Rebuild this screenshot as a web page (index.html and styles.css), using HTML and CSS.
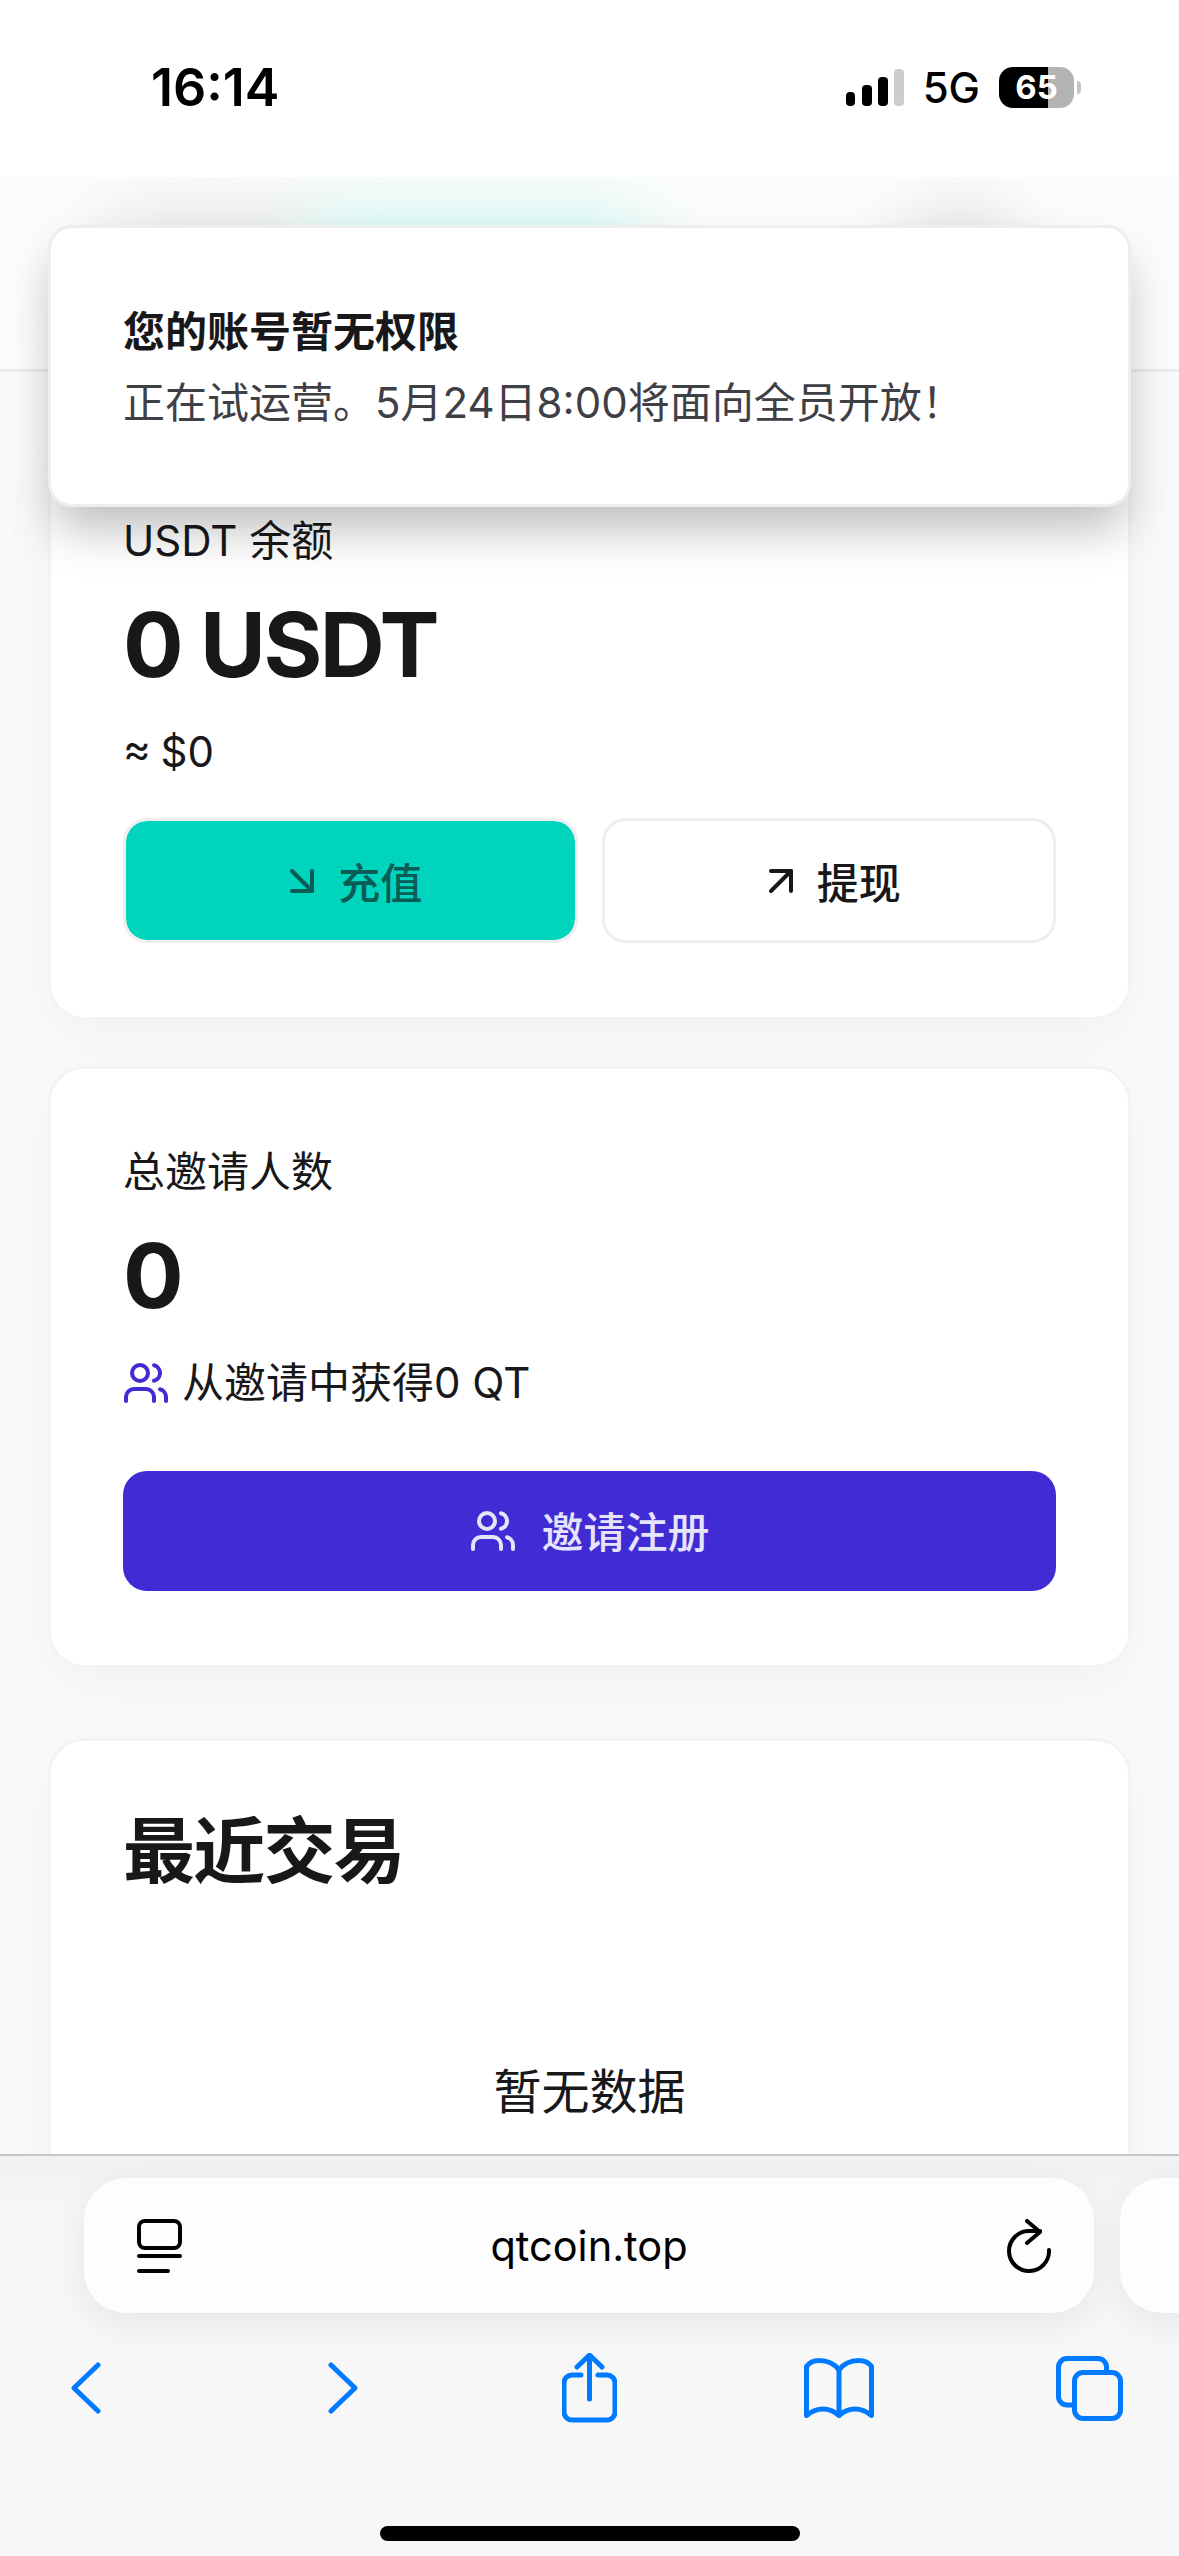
FILE: index.html
```html
<!DOCTYPE html>
<html lang="zh-CN">
<head>
<meta charset="utf-8">
<title>qtcoin.top</title>
<link rel="stylesheet" href="styles.css">
</head>
<body>
<div class="phone">
  <div class="statusbar">
    <span class="time">16:14</span>
    <div class="status-right">
      <svg class="signal" width="58" height="37" viewBox="0 0 58 37">
        <rect x="0" y="23" width="9" height="14" rx="4"/>
        <rect x="16" y="16" width="10" height="21" rx="4"/>
        <rect x="32" y="8" width="10" height="29" rx="4"/>
        <rect class="signal-off" x="48" y="0" width="10" height="37" rx="4"/>
      </svg>
      <span class="net">5G</span>
      <div class="battery">65</div>
      <span class="batt-nub"></span>
    </div>
  </div>

  <header class="topbar">
    <span class="blob blob-gray"></span>
    <span class="blob blob-teal"></span>
    <span class="blob blob-avatar"></span>
  </header>

  <main class="content">
    <section class="card card-balance">
      <div class="label">USDT 余额</div>
      <div class="amount">0 USDT</div>
      <div class="label approx">≈ $0</div>
      <div class="actions">
        <button class="btn btn-teal">
          <svg class="lucide" viewBox="0 0 24 24"><path d="m7 7 10 10"/><path d="M17 7v10H7"/></svg>
          <span>充值</span>
        </button>
        <button class="btn btn-plain">
          <svg class="lucide" viewBox="0 0 24 24"><path d="M7 7h10v10"/><path d="M7 17 17 7"/></svg>
          <span>提现</span>
        </button>
      </div>
    </section>

    <section class="card card-invite">
      <div class="label">总邀请人数</div>
      <div class="amount">0</div>
      <div class="label earned">
        <svg class="lucide lucide-purple" viewBox="0 0 24 24"><path d="M16 21v-2a4 4 0 0 0-4-4H6a4 4 0 0 0-4 4v2"/><circle cx="9" cy="7" r="4"/><path d="M22 21v-2a4 4 0 0 0-3-3.87"/><path d="M16 3.13a4 4 0 0 1 0 7.75"/></svg>
        <span>从邀请中获得0 QT</span>
      </div>
      <button class="btn-invite">
        <svg class="lucide" viewBox="0 0 24 24"><path d="M16 21v-2a4 4 0 0 0-4-4H6a4 4 0 0 0-4 4v2"/><circle cx="9" cy="7" r="4"/><path d="M22 21v-2a4 4 0 0 0-3-3.87"/><path d="M16 3.13a4 4 0 0 1 0 7.75"/></svg>
        <span class="btn-invite-text">邀请注册</span>
      </button>
    </section>

    <section class="card card-recent">
      <h2 class="recent-title">最近交易</h2>
      <div class="empty">暂无数据</div>
    </section>
  </main>

  <div class="toast">
    <div class="toast-title">您的账号暂无权限</div>
    <div class="toast-text">正在试运营。5月24日8:00将面向全员开放！</div>
  </div>

  <div class="safari">
    <div class="pills">
      <div class="pill">
        <svg class="pill-tabs" width="45" height="54" viewBox="0 0 45 54">
          <rect x="2" y="2" width="41" height="27" rx="6"/>
          <path d="M2 37h41"/>
          <path d="M2 52h29"/>
        </svg>
        <span class="url">qtcoin.top</span>
        <svg class="pill-reload" width="44" height="54" viewBox="0 0 44 54">
          <path d="M42 31a20 20 0 1 1-20-19h11"/>
          <path d="M20 2l13 11-13 11"/>
        </svg>
      </div>
      <div class="pill pill-next"></div>
    </div>
    <div class="toolbar">
      <svg class="tool" width="30" height="52" viewBox="0 0 30 52"><path d="M27 3 3 26l24 23"/></svg>
      <svg class="tool" width="30" height="52" viewBox="0 0 30 52"><path d="M3 3l24 23L3 49"/></svg>
      <svg class="tool tool-share" width="55" height="70" viewBox="0 0 55 70">
        <path d="M19 22h-9a8 8 0 0 0-8 8v29a8 8 0 0 0 8 8h35a8 8 0 0 0 8-8V30a8 8 0 0 0-8-8h-9"/>
        <path d="M27.500 3v43"/>
        <path d="M15 14 27.500 2 40 14"/>
      </svg>
      <svg class="tool tool-book" width="70" height="60" viewBox="0 0 70 60">
        <path d="M35 12C30 5 22 2.500 15 2.500 9 2.500 5 5 2.500 8.500v49C8 53 13 51 19 51c7 0 12 3 16 6.500 4-3.500 9-6.500 16-6.500 6 0 11 2 16.500 6.500v-49C65 5 61 2.500 55 2.500 48 2.500 40 5 35 12Zm0 0v45"/>
      </svg>
      <svg class="tool tool-copies" width="67" height="65" viewBox="0 0 67 65">
        <path d="M16 49h-5a8.500 8.500 0 0 1-8.500-8.500v-29A8.500 8.500 0 0 1 11 2.500h31a8.500 8.500 0 0 1 8.500 8.500v4"/>
        <rect x="18.500" y="16.500" width="46" height="46" rx="8.500"/>
      </svg>
    </div>
    <div class="home-row"><span class="home-bar"></span></div>
  </div>
</div>
</body>
</html>
```

FILE: styles.css
```css
* { box-sizing: border-box; }
html, body { margin: 0; padding: 0; }
body {
  background: #fafafa;
  color: #18181b;
  font-family: Inter, "Noto Sans CJK SC", sans-serif;
}
.phone {
  position: relative;
  width: 1179px;
  height: 2556px;
  overflow: hidden;
  background: #fafafa;
}

/* status bar */
.statusbar {
  height: 177px;
  background: #fff;
  display: flex;
  justify-content: space-between;
  align-items: center;
  padding: 0 98px 2px 151px;
  color: #000;
}
.time { font-size: 52px; font-weight: 600; line-height: 60px; }
.status-right { display: flex; align-items: center; }
.signal rect { fill: #000; }
.signal .signal-off { fill: #cdcdcd; }
.net { font-size: 42px; font-weight: 500; margin: 0 19px 0 19px; line-height: 48px; }
.battery {
  width: 75px;
  height: 41px;
  border-radius: 14px;
  background: linear-gradient(to right, #000 49px, #b3b3b3 49px);
  color: #fff;
  font-size: 33px;
  font-weight: 700;
  line-height: 41px;
  text-align: center;
}
.batt-nub {
  width: 4px;
  height: 13px;
  margin-left: 3px;
  background: #c4c4c4;
  border-radius: 0 6px 6px 0;
}

/* blurred site header behind the notice */
.topbar {
  height: 195px;
  background: #fcfcfc;
  border-bottom: 3px solid #ececec;
  display: flex;
  align-items: center;
  padding: 0 170px 0 110px;
  overflow: hidden;
}
.blob { display: block; height: 90px; filter: blur(40px); }
.blob-gray { width: 200px; background: #d8d8d8; }
.blob-teal { width: 330px; background: #b4f3ea; }
.blob-avatar { width: 100px; margin-left: auto; background: #c4c4c4; border-radius: 50%; }

/* cards */
.content { padding: 66px 48px 0; }
.card {
  background: #fff;
  border: 3px solid #f3f3f3;
  border-radius: 36px;
  padding: 72px 72px 74px;
  box-shadow: 0 18px 60px rgba(0, 0, 0, 0.035);
}
.card-invite { margin-top: 46px; padding-top: 75px; }
.card-recent { margin-top: 70px; padding-top: 74px; padding-bottom: 400px; }
.label { font-size: 42px; line-height: 56px; }
.amount { font-size: 90px; font-weight: 700; letter-spacing: -2.5px; line-height: 108px; margin-top: 22px; }
.approx { margin-top: 25px; word-spacing: -2px; }
.earned {
  display: flex;
  align-items: center;
  gap: 12px;
  margin-top: 25px;
  margin-left: -1px;
}
.lucide {
  width: 48px;
  height: 48px;
  fill: none;
  stroke: currentColor;
  stroke-width: 2;
  stroke-linecap: round;
  stroke-linejoin: round;
  flex: none;
}
.lucide-purple { color: #402bd4; }

.actions {
  display: grid;
  grid-template-columns: 1fr 1fr;
  gap: 24px;
  margin-top: 38px;
}
.btn {
  height: 125px;
  border: 3px solid #eeeeee;
  border-radius: 24px;
  display: flex;
  align-items: center;
  justify-content: center;
  gap: 12px;
  font: inherit;
  font-size: 42px;
  font-weight: 500;
}
.btn-teal { background: #00d4bc; color: #0b5c55; background-clip: padding-box; }
.btn-plain { background: #fff; color: #18181b; }
.btn-invite {
  width: 933px;
  height: 120px;
  margin: 60px 0 0;
  border: 0;
  border-radius: 24px;
  background: #402bd4;
  color: #e6e4fb;
  display: flex;
  align-items: center;
  justify-content: center;
  gap: 24px;
  font: inherit;
  font-size: 42px;
  font-weight: 500;
}
.btn-invite-text { padding-bottom: 4px; }
.recent-title { margin: 0; font-size: 72px; font-weight: 700; letter-spacing: -1.8px; line-height: 72px; }
.empty { margin-top: 169px; font-size: 48px; line-height: 72px; text-align: center; }

/* notice */
.toast {
  position: absolute;
  top: 225px;
  left: 48px;
  width: 1083px;
  height: 282px;
  background: #fff;
  border: 3px solid #eeeeee;
  border-radius: 24px;
  box-shadow: 0 28px 48px -6px rgba(0, 0, 0, 0.26);
  display: flex;
  flex-direction: column;
  justify-content: center;
  gap: 15px;
  padding: 2px 72px 0;
}
.toast-title { font-size: 42px; font-weight: 600; line-height: 56px; }
.toast-text { font-size: 42px; line-height: 56px; color: #3f3f46; }

/* safari chrome */
.safari {
  position: absolute;
  left: 0;
  right: 0;
  bottom: 0;
  height: 402px;
  background: linear-gradient(#f1f1f1, #f7f7f7 60px);
  border-top: 2px solid #c6c6c6;
}
.pills {
  display: flex;
  gap: 26px;
  margin: 22px 0 0 84px;
}
.pill {
  flex: none;
  width: 1010px;
  height: 135px;
  background: #fdfdfd;
  border-radius: 42px;
  box-shadow: 0 10px 36px rgba(0, 0, 0, 0.07);
  display: grid;
  grid-template-columns: 1fr auto 1fr;
  align-items: center;
  padding: 0 53px;
}
.pill-next { width: 200px; }
.pill-tabs { fill: none; stroke: #000; stroke-width: 4; stroke-linecap: round; }
.pill-reload {
  justify-self: end;
  margin-right: -10px;
  fill: none;
  stroke: #000;
  stroke-width: 4;
  stroke-linecap: round;
  stroke-linejoin: round;
}
.url { font-size: 41.500px; color: #000; line-height: 52px; }

.toolbar {
  display: grid;
  grid-template-columns: 257px 234px 242px 252px 67px;
  align-items: center;
  height: 70px;
  margin-top: 40px;
  padding-left: 71px;
}
.tool {
  fill: none;
  stroke: #007aff;
  stroke-width: 5;
  stroke-linecap: round;
  stroke-linejoin: round;
}
.home-row {
  display: flex;
  justify-content: center;
  margin-top: 103px;
}
.home-bar {
  width: 420px;
  height: 15px;
  background: #000;
  border-radius: 8px;
}
```
